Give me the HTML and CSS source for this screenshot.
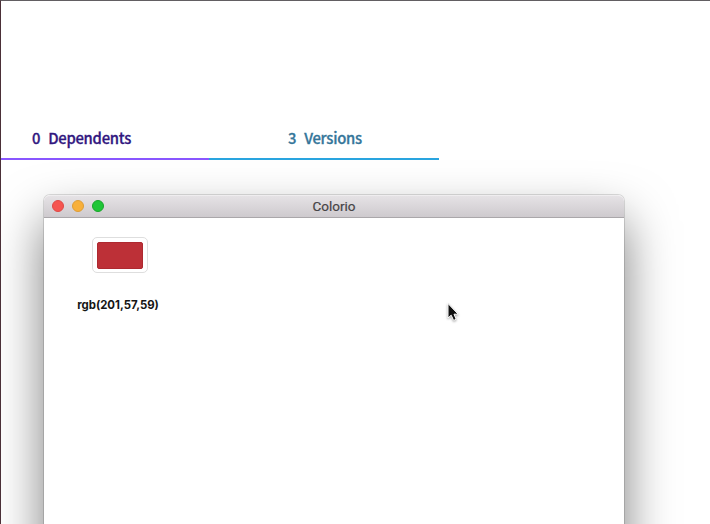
FILE: index.html
```html
<!DOCTYPE html>
<html lang="en">
<head>
<meta charset="utf-8">
<title>Colorio</title>
<link rel="stylesheet" href="styles.css">
</head>
<body>
<main class="page">
  <nav class="tabs">
    <div class="tab dependents"><span class="count">0</span><span class="word">Dependents</span></div>
    <div class="tab versions"><span class="count">3</span><span class="word">Versions</span></div>
  </nav>
  <section class="window">
    <header class="titlebar">
      <div class="lights"><i class="light close"></i><i class="light minimize"></i><i class="light expand"></i></div>
      <span class="title">Colorio</span>
    </header>
    <div class="content">
      <div class="picker">
        <div class="well"><div class="swatch"></div></div>
        <div class="value"><span class="value-text">rgb(201,57,59)</span></div>
      </div>
    </div>
  </section>
  <svg class="cursor" width="16" height="24" viewBox="0 0 16 24">
    <path d="M2 1.5V16l3.2-2.8 2.4 5.2 2.6-1.1-2.2-5.1h4.2z" fill="#111" stroke="#fff" stroke-width="1"/>
  </svg>
</main>
</body>
</html>
```
FILE: styles.css
```css
* { box-sizing: border-box; }
body { margin: 0; background: #fff; }
.page {
  position: relative;
  width: 710px;
  height: 524px;
  overflow: hidden;
  border-top: 1px solid #625e62;
  border-left: 1px solid #4b3038;
  padding-top: 116px;
}
.tabs {
  display: flex;
  width: 439px;
  height: 43px;
  font: 500 14.8px/43px "Noto Sans CJK JP", sans-serif;
  letter-spacing: -.25px;
  -webkit-text-stroke: .3px currentColor;
}
.tab {
  display: flex;
  gap: 8px;
  height: 43px;
  line-height: 41px;
  white-space: nowrap;
}
.dependents { width: 208px; padding-left: 31px; color: #31177f; border-bottom: 2px solid #8956ff; }
.versions { width: 230px; padding-left: 79px; color: #35769a; border-bottom: 2px solid #29a4df; }
.window {
  width: 580px;
  height: 420px;
  margin: 35px 0 0 43px;
  border-radius: 6px 6px 0 0;
  background: #fff;
  box-shadow: 0 0 0 1px rgba(0, 0, 0, .13), 0 25px 50px rgba(0, 0, 0, .52);
}
.titlebar {
  display: grid;
  grid-template-columns: 1fr auto 1fr;
  align-items: center;
  height: 23px;
  padding: 0 0 1px 8px;
  border-radius: 6px 6px 0 0;
  border-top: 1px solid #efedef;
  border-bottom: 1px solid #aaa7aa;
  background: linear-gradient(#e5e2e5, #cecace);
}
.lights { display: flex; gap: 8px; }
.light { width: 12px; height: 12px; border-radius: 50%; }
.close { background: #f65550; border: 1px solid #df4946; }
.minimize { background: #f8b03b; border: 1px solid #de9d37; }
.expand { background: #20c637; border: 1px solid #18a52b; }
.title { font: 400 13.5px/20px Roboto, sans-serif; color: #464446; -webkit-text-stroke: .2px #464446; margin-right: 8px; }
.content { padding: 19px 0 0 29px; }
.picker { width: 90px; display: flex; flex-direction: column; align-items: center; }
.well {
  width: 56px;
  height: 36px;
  margin-left: 3px;
  padding: 4px;
  border: 1px solid #dedede;
  border-radius: 5px;
}
.swatch { height: 27px; border-radius: 2px; background: #bd3037; border: 1px solid #ae2930; }
.value { margin-top: 24px; font: 700 11.4px/16px Inter, sans-serif; color: #151515; }
.cursor { position: absolute; left: 445px; top: 301px; filter: drop-shadow(0 1px 1px rgba(0, 0, 0, .35)); }
```
